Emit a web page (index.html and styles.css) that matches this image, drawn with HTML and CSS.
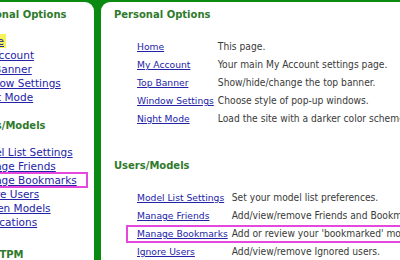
FILE: index.html
```html
<!DOCTYPE html>
<html lang="en">

<head>
    <meta charset="UTF-8">
    <meta name="viewport" content="width=device-width, initial-scale=1.0">
    <title>Options</title>
    <link rel="stylesheet" href="styles.css">
</head>

<body>
    <div class="page">
        <div class="sidebar">
            <div class="side-inner">
                <h3 class="side-head">Personal Options</h3>
                <a href="#" class="side-link current">Home</a>
                <a href="#" class="side-link">My Account</a>
                <a href="#" class="side-link">Top Banner</a>
                <a href="#" class="side-link">Window Settings</a>
                <a href="#" class="side-link">Night Mode</a>

                <h3 class="side-head second">Users/Models</h3>
                <a href="#" class="side-link">Model List Settings</a>
                <a href="#" class="side-link">Manage Friends</a>
                <a href="#" class="side-link marked">Manage Bookmarks</a>
                <a href="#" class="side-link">Ignore Users</a>
                <a href="#" class="side-link">Hidden Models</a>
                <a href="#" class="side-link">Applications</a>

                <h3 class="side-head third">MyTPM</h3>
            </div>
        </div>

        <div class="main">
            <h2 class="section">Personal Options</h2>
            <table class="options">
                <tr><td><a href="#">Home</a></td><td>This page.</td></tr>
                <tr><td><a href="#">My Account</a></td><td>Your main My Account settings page.</td></tr>
                <tr><td><a href="#">Top Banner</a></td><td>Show/hide/change the top banner.</td></tr>
                <tr><td><a href="#">Window Settings</a></td><td>Choose style of pop-up windows.</td></tr>
                <tr><td><a href="#">Night Mode</a></td><td>Load the site with a darker color scheme.</td></tr>
            </table>

            <h2 class="section second">Users/Models</h2>
            <table class="options">
                <tr><td><a href="#">Model List Settings</a></td><td>Set your model list preferences.</td></tr>
                <tr><td><a href="#">Manage Friends</a></td><td>Add/view/remove Friends and Bookmarks.</td></tr>
                <tr class="marked"><td><a href="#">Manage Bookmarks</a></td><td>Add or review your 'bookmarked' models.</td></tr>
                <tr><td><a href="#">Ignore Users</a></td><td>Add/view/remove Ignored users.</td></tr>
            </table>
        </div>
    </div>
</body>

</html>
```

FILE: styles.css
```css
body {
    margin: 0;
    background-color: #0b8a12;
    overflow: hidden;
}

.page {
    display: flex;
    gap: 7px;
    padding-top: 2px;
    height: 258px;
}

.sidebar {
    width: 94px;
    flex-shrink: 0;
    background-color: #fff;
    border-top-right-radius: 9px;
    overflow: hidden;
}

.side-inner {
    margin-left: -30px;
    width: 200px;
}

.side-head {
    font-family: "DejaVu Sans", sans-serif;
    font-size: 10px;
    font-weight: bold;
    color: #2f7a2b;
    margin: 0;
    margin-top: 4px;
    line-height: 18px;
    height: 18px;
}

.side-head.second {
    margin-top: 13px;
}

.side-head.third {
    margin-top: 17px;
    margin-left: 13px;
}

.side-link {
    display: block;
    margin-left: 3px;
    font-family: "DejaVu Sans", sans-serif;
    font-size: 10.5px;
    line-height: 14px;
    height: 14px;
    color: #2323a8;
    white-space: nowrap;
}

.side-head + .side-link {
    margin-top: 10px;
}

.side-link.current {
    background-color: #f5f25a;
    width: 33px;
}

.side-link.marked {
    outline: 2px solid #e548dc;
    outline-offset: -1px;
    margin-left: 0;
    padding-left: 3px;
    width: 114px;
}

.main {
    flex: 1;
    background-color: #fff;
    border-top-left-radius: 9px;
    overflow: hidden;
    padding-left: 13px;
}

.section {
    font-family: "DejaVu Sans", sans-serif;
    font-size: 10px;
    font-weight: bold;
    color: #2f7a2b;
    margin: 0;
    margin-top: 4px;
    line-height: 18px;
}

.section.second {
    margin-top: 29px;
}

.options {
    margin-top: 14px;
    margin-left: 12px;
    border-collapse: separate;
    border-spacing: 0;
    white-space: nowrap;
}

.options td {
    padding: 0 4px 0 0;
    line-height: 14px;
    border-top: 2px solid transparent;
    border-bottom: 2px solid transparent;
    font-family: "DejaVu Sans Condensed", "DejaVu Sans", sans-serif;
    font-size: 10.2px;
    color: #3a3a3a;
}

.options td:first-child {
    border-left: 2px solid transparent;
    padding-left: 9px;
}

.options a {
    font-family: "DejaVu Sans", sans-serif;
    font-size: 9.2px;
    color: #2323a8;
}

.options tr.marked td {
    border-top-color: #e548dc;
    border-bottom-color: #e548dc;
}

.options tr.marked td:first-child {
    border-left-color: #e548dc;
}

.options tr.marked td:last-child {
    border-right: 2px solid #e548dc;
}
```
